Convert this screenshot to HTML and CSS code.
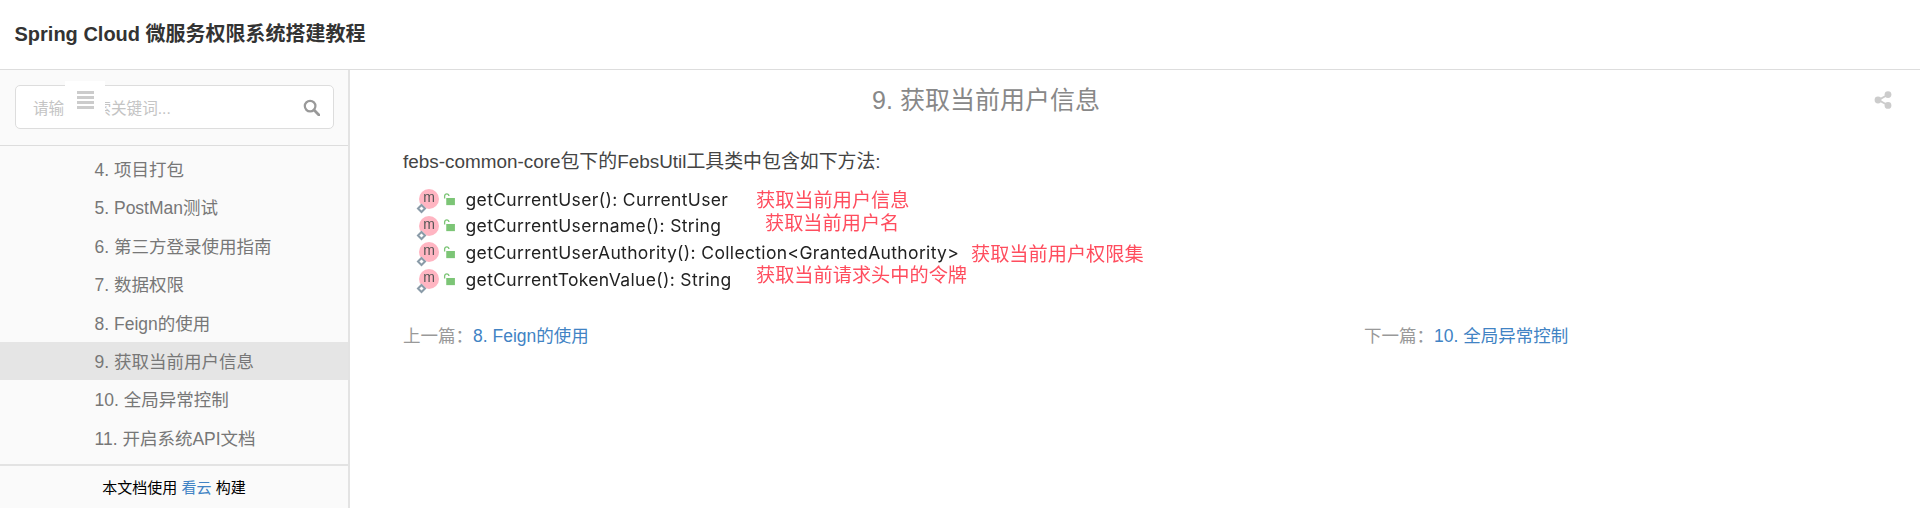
FILE: index.html
```html
<!DOCTYPE html>
<html lang="zh-CN">
<head>
    <meta charset="UTF-8">
    <title>9. 获取当前用户信息</title>
    <link rel="stylesheet" href="styles.css">
</head>
<body>
    <header class="top">Spring Cloud 微服务权限系统搭建教程</header>

    <div class="page">
        <aside class="side">
            <div class="search">
                <div class="search-box">
                    <span class="placeholder">请输入搜索关键词...</span>
                    <svg class="search-icon" viewBox="0 0 16 16" width="17" height="17">
                        <circle cx="6.7" cy="6.7" r="5" fill="none" stroke="#999" stroke-width="2.1"/>
                        <path d="M10.4 10.4 15 15" stroke="#999" stroke-width="2.6" stroke-linecap="round"/>
                    </svg>
                </div>
                <button class="toggle" aria-label="目录">
                    <span></span><span></span><span></span><span></span>
                </button>
            </div>

            <ul class="toc">
                <li>4. 项目打包</li>
                <li>5. PostMan测试</li>
                <li>6. 第三方登录使用指南</li>
                <li>7. 数据权限</li>
                <li>8. Feign的使用</li>
                <li class="active">9. 获取当前用户信息</li>
                <li>10. 全局异常控制</li>
                <li>11. 开启系统API文档</li>
            </ul>

            <div class="built">本文档使用 <a href="#">看云</a> 构建</div>
        </aside>

        <main class="main">
            <svg class="share" viewBox="0 0 18 18" width="18" height="18">
                <path d="M13.5 4 4.5 9l9 5" fill="none" stroke="#ccc" stroke-width="2"/>
                <circle cx="14" cy="3.6" r="3.4" fill="#ccc"/>
                <circle cx="4" cy="9" r="3.4" fill="#ccc"/>
                <circle cx="14" cy="14.4" r="3.4" fill="#ccc"/>
            </svg>

            <h1 class="title">9. 获取当前用户信息</h1>

            <p class="intro">febs-common-core包下的FebsUtil工具类中包含如下方法:</p>

            <div class="shot">
                <div class="method"><i class="m">m<b></b></i><svg class="lock" viewBox="0 0 12 12" width="13" height="13"><path d="M1.5 5V2.8a2 2 0 0 1 4 0" fill="none" stroke="#7cc576" stroke-width="1.2"/><rect x="3" y="4.6" width="8" height="6.6" fill="#7cc576"/></svg>getCurrentUser(): CurrentUser</div>
                <div class="method"><i class="m">m<b></b></i><svg class="lock" viewBox="0 0 12 12" width="13" height="13"><path d="M1.5 5V2.8a2 2 0 0 1 4 0" fill="none" stroke="#7cc576" stroke-width="1.2"/><rect x="3" y="4.6" width="8" height="6.6" fill="#7cc576"/></svg>getCurrentUsername(): String</div>
                <div class="method"><i class="m">m<b></b></i><svg class="lock" viewBox="0 0 12 12" width="13" height="13"><path d="M1.5 5V2.8a2 2 0 0 1 4 0" fill="none" stroke="#7cc576" stroke-width="1.2"/><rect x="3" y="4.6" width="8" height="6.6" fill="#7cc576"/></svg>getCurrentUserAuthority(): Collection&lt;GrantedAuthority&gt;</div>
                <div class="method"><i class="m">m<b></b></i><svg class="lock" viewBox="0 0 12 12" width="13" height="13"><path d="M1.5 5V2.8a2 2 0 0 1 4 0" fill="none" stroke="#7cc576" stroke-width="1.2"/><rect x="3" y="4.6" width="8" height="6.6" fill="#7cc576"/></svg>getCurrentTokenValue(): String</div>

                <span class="note note-1">获取当前用户信息</span>
                <span class="note note-2">获取当前用户名</span>
                <span class="note note-3">获取当前用户权限集</span>
                <span class="note note-4">获取当前请求头中的令牌</span>
            </div>

            <nav class="pager">
                <div class="prev">上一篇：<a href="#">8. Feign的使用</a></div>
                <div>下一篇：<a href="#">10. 全局异常控制</a></div>
            </nav>
        </main>
    </div>
</body>
</html>
```

FILE: styles.css
```css
* {
    box-sizing: border-box;
}

html, body {
    height: 100%;
    margin: 0;
    overflow: hidden;
}

body {
    font-family: "Liberation Sans", "Noto Sans CJK SC", sans-serif;
    font-size: 17.5px;
    color: #333;
    background-color: #fff;
}

a {
    color: #4183c4;
    text-decoration: none;
}

.top {
    height: 70px;
    line-height: 68px;
    padding-left: 14.5px;
    font-size: 20px;
    font-weight: bold;
    color: #333;
    border-bottom: 1px solid #ddd;
}

.page {
    display: flex;
    height: calc(100% - 70px);
}

/* sidebar */
.side {
    display: flex;
    flex-direction: column;
    width: 350px;
    background-color: #fafafa;
    border-right: 2px solid #e3e3e3;
}

.search {
    position: relative;
    height: 76px;
    padding: 15px 15px 0;
    border-bottom: 1px solid #ddd;
}

.search-box {
    display: flex;
    align-items: center;
    justify-content: space-between;
    width: 319px;
    height: 44px;
    padding: 0 13px 0 17px;
    background-color: #fff;
    border: 1px solid #ddd;
    border-radius: 5px;
}

.placeholder {
    font-size: 15.6px;
    color: #c4c4c4;
}

.toggle {
    position: absolute;
    top: 11px;
    left: 65px;
    display: flex;
    flex-direction: column;
    align-items: center;
    gap: 2px;
    width: 40px;
    height: 40px;
    padding: 10px 0 0;
    background-color: #fff;
    border: none;
}

.toggle span {
    width: 17px;
    height: 3px;
    background-color: #ccc;
}

.toc {
    flex: 1;
    margin: 0;
    padding: 4px 0 0;
    list-style: none;
    color: #777;
}

.toc li {
    height: 38.4px;
    line-height: 40px;
    padding-left: 94.5px;
}

.toc .active {
    background-color: #e5e5e5;
}

.built {
    height: 44px;
    padding-top: 12px;
    font-size: 15px;
    line-height: 20px;
    text-align: center;
    color: #000;
    border-top: 2px solid #e3e3e3;
}

/* content */
.main {
    position: relative;
    flex: 1;
    padding-left: 53px;
}

.share {
    position: absolute;
    top: 21px;
    right: 28px;
}

.title {
    width: 1166px;
    margin: 0;
    padding-top: 15px;
    font-size: 25px;
    line-height: 30px;
    font-weight: normal;
    text-align: center;
    color: #888;
}

.intro {
    margin: 0;
    padding-top: 33px;
    font-size: 18.9px;
    line-height: 28px;
    color: #444;
}

.shot {
    position: relative;
    height: 142px;
    padding: 10px 0 0 16px;
    filter: blur(0.35px);
}

.method {
    display: flex;
    align-items: center;
    height: 26.6px;
    font-family: Inter, "Liberation Sans", sans-serif;
    font-size: 17.5px;
    letter-spacing: 0.35px;
    color: #222;
}

.m {
    position: relative;
    display: block;
    width: 20px;
    height: 20px;
    margin-right: 4px;
    font-family: "Liberation Sans", sans-serif;
    font-style: normal;
    font-size: 14px;
    line-height: 17px;
    letter-spacing: 0;
    text-align: center;
    color: #555;
    background-color: #ffb5c2;
    border-radius: 50%;
}

.m b {
    position: absolute;
    left: -1px;
    bottom: -3px;
    width: 7px;
    height: 7px;
    background-color: #fff;
    border: 2px solid #8a9ba8;
    transform: rotate(45deg);
}

.lock {
    margin-right: 9.5px;
}

.note {
    position: absolute;
    font-size: 19.2px;
    line-height: 24px;
    color: #ff4d5e;
}

.note-1 {
    top: 13px;
    left: 353px;
}

.note-2 {
    top: 36px;
    left: 362px;
}

.note-3 {
    top: 67px;
    left: 568px;
}

.note-4 {
    top: 88px;
    left: 353px;
}

.pager {
    display: flex;
    padding-top: 6px;
    line-height: 24px;
    color: #999;
}

.prev {
    width: 961px;
}
```
